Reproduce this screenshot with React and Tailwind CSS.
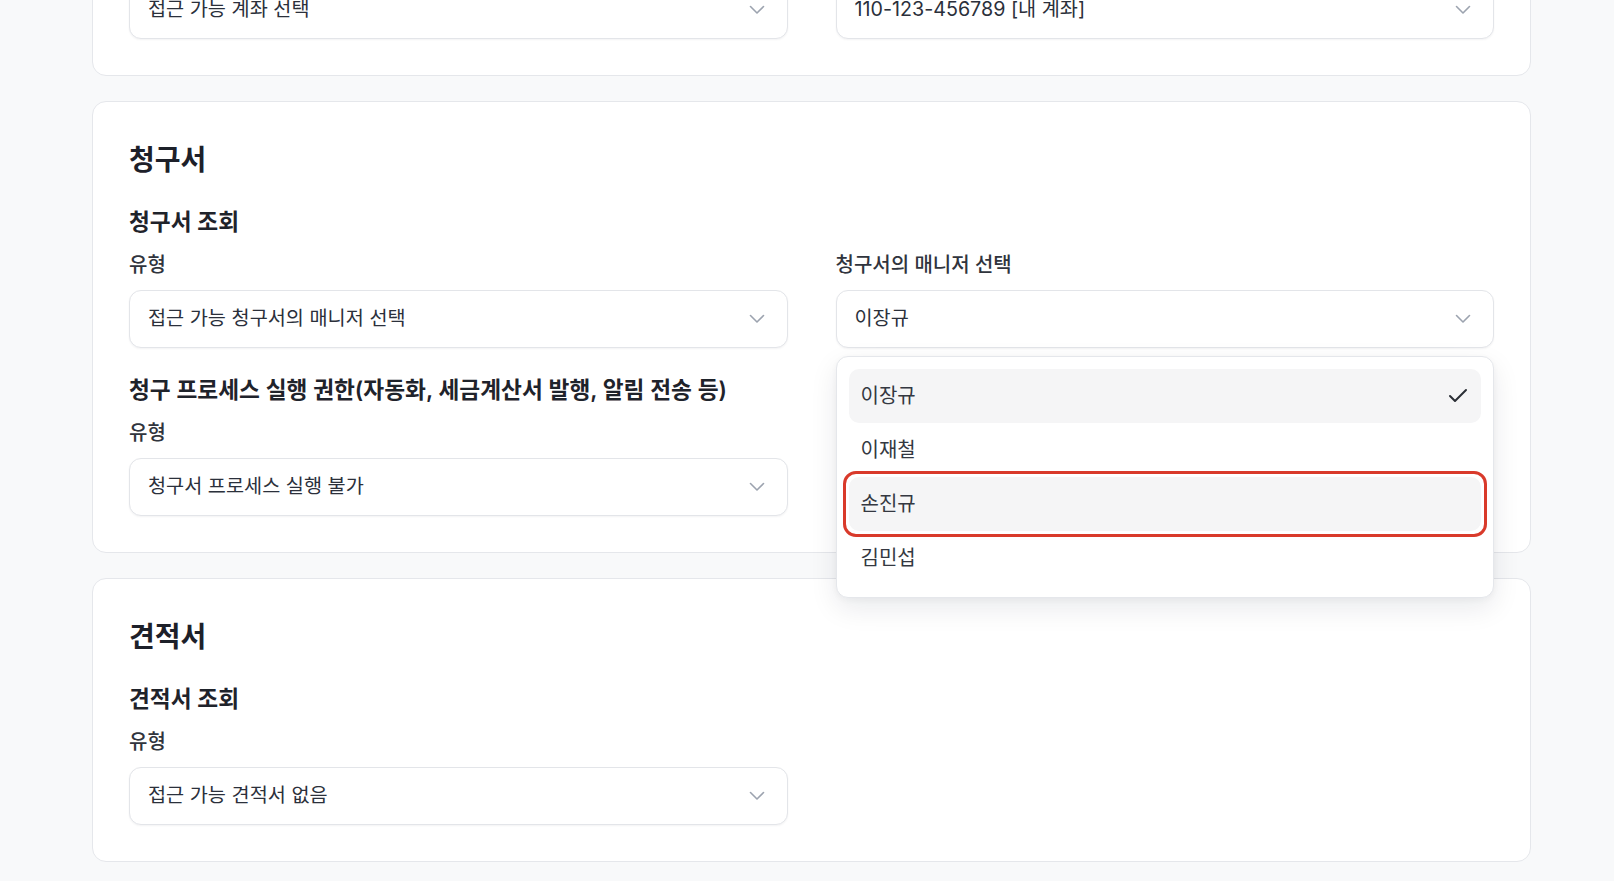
import { Check } from 'lucide-react';

const font = { fontFamily: 'Inter, "Noto Sans CJK KR", "Noto Sans", sans-serif' };

function Chevron() {
  return (
    <svg width="16" height="10" viewBox="0 0 16 10" fill="none" className="shrink-0 text-[#9ca3af]">
      <path d="M1.5 1.5 8 8l6.5-6.5" stroke="currentColor" strokeWidth="1.6" strokeLinecap="round" strokeLinejoin="round" />
    </svg>
  );
}

function SelectBox({ value }) {
  return (
    <div className="h-[58px] rounded-[12px] border border-[#e3e5e9] bg-white pl-[18px] pr-[22px] flex items-center justify-between shadow-[0_1px_2px_rgba(16,24,40,0.05)]">
      <span className="text-[19.7px] text-[#2b303b] leading-none">{value}</span>
      <Chevron />
    </div>
  );
}

function Field({ label, value, children }) {
  return (
    <div className="relative">
      <div className="text-[20px] leading-[26px] font-medium text-[#30343d]">{label}</div>
      <div className="mt-[12px]">
        <SelectBox value={value} />
      </div>
      {children}
    </div>
  );
}

const managers = ['이장규', '이재철', '손진규', '김민섭'];

function ManagerMenu() {
  return (
    <div className="absolute left-0 right-0 top-full mt-[8px] z-10 rounded-[12px] border border-[#e5e7eb] bg-white p-3 shadow-[0_10px_28px_rgba(15,23,42,0.09),0_2px_6px_rgba(15,23,42,0.04)]">
      {managers.map((name, i) => (
        <div
          key={name}
          className={
            'relative h-[54px] rounded-[10px] pl-3 pr-[11px] flex items-center justify-between text-[20px] text-[#343841] ' +
            (i === 0 || i === 2 ? 'bg-[#f5f5f6]' : '')
          }
        >
          <span>{name}</span>
          {i === 0 && <Check size={24} strokeWidth={2} className="text-[#2b2f36]" />}
          {i === 2 && (
            <div className="absolute -inset-[6px] rounded-[13px] border-[3px] border-[#d93a2b] pointer-events-none" />
          )}
        </div>
      ))}
    </div>
  );
}

function Card({ title, children, className = '' }) {
  return (
    <section className={'rounded-[14px] border border-[#e5e7eb] bg-white px-9 pb-9 ' + className}>
      {title && <h2 className="text-[28px] leading-[36px] font-semibold text-[#1d2029]">{title}</h2>}
      {children}
    </section>
  );
}

function SubTitle({ children }) {
  return <h3 className="text-[22.7px] leading-[30px] font-semibold text-[#1f232b]">{children}</h3>;
}

export default function App() {
  return (
    <div className="min-h-screen bg-[#f8f9fa] overflow-hidden" style={font}>
      <div className="pl-[92px] w-[1531px]">
        <Card className="-mt-[56px] pt-9">
          <div className="grid grid-cols-2 gap-x-12">
            <SelectBox value="접근 가능 계좌 선택" />
            <SelectBox value="110-123-456789 [내 계좌]" />
          </div>
        </Card>

        <Card title="청구서" className="mt-[25px] pt-[40px]">
          <div className="mt-[29px]">
            <SubTitle>청구서 조회</SubTitle>
            <div className="mt-[15px] grid grid-cols-2 gap-x-12">
              <Field label="유형" value="접근 가능 청구서의 매니저 선택" />
              <Field label="청구서의 매니저 선택" value="이장규">
                <ManagerMenu />
              </Field>
            </div>
          </div>
          <div className="mt-[27px]">
            <SubTitle>청구 프로세스 실행 권한(자동화, 세금계산서 발행, 알림 전송 등)</SubTitle>
            <div className="mt-[15px] grid grid-cols-2 gap-x-12">
              <Field label="유형" value="청구서 프로세스 실행 불가" />
            </div>
          </div>
        </Card>

        <Card title="견적서" className="mt-[25px] pt-[40px]">
          <div className="mt-[29px]">
            <SubTitle>견적서 조회</SubTitle>
            <div className="mt-[15px] grid grid-cols-2 gap-x-12">
              <Field label="유형" value="접근 가능 견적서 없음" />
            </div>
          </div>
        </Card>
      </div>
    </div>
  );
}
